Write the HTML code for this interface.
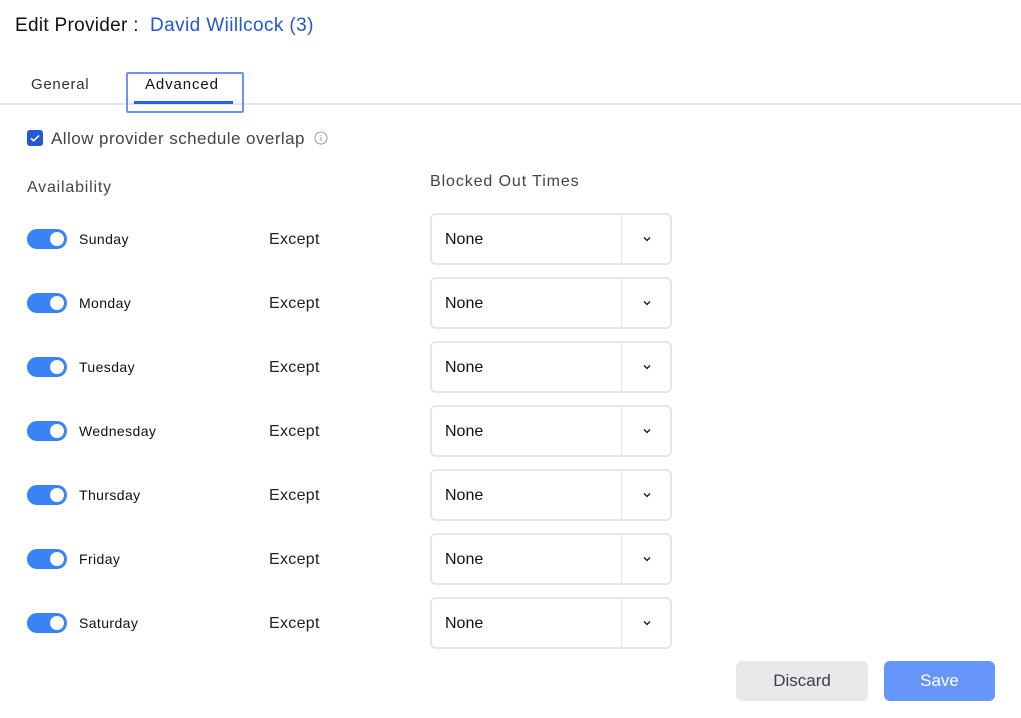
<!DOCTYPE html>
<html><head><style>
body{margin:0;width:1021px;height:718px;background:#fff;font-family:"Liberation Sans",sans-serif;position:relative;overflow:hidden;color:#111}
.a{position:absolute}
.tog{position:absolute;left:27px;width:40px;height:20px;border-radius:10px;background:#3b82f6}
.tog::after{content:"";position:absolute;right:3px;top:3px;width:14px;height:14px;border-radius:50%;background:#fff}
.day{position:absolute;left:79px;font-size:14px;color:#111;letter-spacing:.4px}
.exc{position:absolute;left:269px;font-size:16px;color:#222;letter-spacing:.3px;margin-top:1px}
.sel{position:absolute;left:430px;width:238px;height:48px;border:2px solid #e5e5ea;border-radius:6px;box-sizing:content-box}
.sel span{position:absolute;left:13px;top:16px;font-size:16px;color:#111}
.sel i{position:absolute;left:189px;top:0;bottom:0;border-left:1px solid #e5e5ea}
.sel svg{position:absolute;left:210px;top:20px}
</style></head><body>
<div class="a" style="left:15px;top:15px;font-size:19px;letter-spacing:.3px">Edit Provider :</div>
<div class="a" style="left:150px;top:15px;font-size:19px;color:#2456d6;letter-spacing:.4px">David Wiillcock (3)</div>
<div class="a" style="left:31px;top:76px;font-size:15px;color:#333;letter-spacing:.7px">General</div>
<div class="a" style="left:0;top:103px;width:1021px;height:2px;background:#e5e5ea"></div>
<div class="a" style="left:126px;top:72px;width:114px;height:37px;border:2px solid #6b93f5;border-radius:2px"></div>
<div class="a" style="left:145px;top:76px;font-size:15px;color:#111;letter-spacing:.9px">Advanced</div>
<div class="a" style="left:134px;top:101px;width:99px;height:3px;background:#2563eb"></div>
<div class="a" style="left:27px;top:130px;width:16px;height:16px;border-radius:3px;background:#2456d6"><svg width="16" height="16"><path d="M4 8.3l2.6 2.5L12 5.5" stroke="#fff" stroke-width="1.6" fill="none"/></svg></div>
<div class="a" style="left:51px;top:129px;font-size:17px;color:#444;letter-spacing:.45px">Allow provider schedule overlap</div>
<svg class="a" style="left:314px;top:131px" width="14" height="14"><circle cx="7" cy="7" r="6" stroke="#999" fill="none"/><path d="M7 6v4M7 4v1" stroke="#999"/></svg>
<div class="a" style="left:27px;top:179px;font-size:16px;color:#444;letter-spacing:.8px">Availability</div>
<div class="a" style="left:430px;top:173px;font-size:16px;color:#444;letter-spacing:.9px">Blocked Out Times</div>

<div class="tog" style="top:229px"></div><div class="day" style="top:231px">Sunday</div><div class="exc" style="top:230px">Except</div>
<div class="sel" style="top:213px"><span>None</span><i></i><svg width="10" height="8"><path d="M2 2.5l3 3 3-3" stroke="#111" stroke-width="1.3" fill="none"/></svg></div>
<div class="tog" style="top:293px"></div><div class="day" style="top:295px">Monday</div><div class="exc" style="top:294px">Except</div>
<div class="sel" style="top:277px"><span>None</span><i></i><svg width="10" height="8"><path d="M2 2.5l3 3 3-3" stroke="#111" stroke-width="1.3" fill="none"/></svg></div>
<div class="tog" style="top:357px"></div><div class="day" style="top:359px">Tuesday</div><div class="exc" style="top:358px">Except</div>
<div class="sel" style="top:341px"><span>None</span><i></i><svg width="10" height="8"><path d="M2 2.5l3 3 3-3" stroke="#111" stroke-width="1.3" fill="none"/></svg></div>
<div class="tog" style="top:421px"></div><div class="day" style="top:423px">Wednesday</div><div class="exc" style="top:422px">Except</div>
<div class="sel" style="top:405px"><span>None</span><i></i><svg width="10" height="8"><path d="M2 2.5l3 3 3-3" stroke="#111" stroke-width="1.3" fill="none"/></svg></div>
<div class="tog" style="top:485px"></div><div class="day" style="top:487px">Thursday</div><div class="exc" style="top:486px">Except</div>
<div class="sel" style="top:469px"><span>None</span><i></i><svg width="10" height="8"><path d="M2 2.5l3 3 3-3" stroke="#111" stroke-width="1.3" fill="none"/></svg></div>
<div class="tog" style="top:549px"></div><div class="day" style="top:551px">Friday</div><div class="exc" style="top:550px">Except</div>
<div class="sel" style="top:533px"><span>None</span><i></i><svg width="10" height="8"><path d="M2 2.5l3 3 3-3" stroke="#111" stroke-width="1.3" fill="none"/></svg></div>
<div class="tog" style="top:613px"></div><div class="day" style="top:615px">Saturday</div><div class="exc" style="top:614px">Except</div>
<div class="sel" style="top:597px"><span>None</span><i></i><svg width="10" height="8"><path d="M2 2.5l3 3 3-3" stroke="#111" stroke-width="1.3" fill="none"/></svg></div>

<div class="a" style="left:736px;top:661px;width:132px;height:40px;border-radius:6px;background:#e9e9ec;color:#3a3f4b;font-size:17px;text-align:center;line-height:40px">Discard</div>
<div class="a" style="left:884px;top:661px;width:111px;height:40px;border-radius:6px;background:#6796fb;color:#fff;font-size:17px;text-align:center;line-height:40px">Save</div>
</body></html>
